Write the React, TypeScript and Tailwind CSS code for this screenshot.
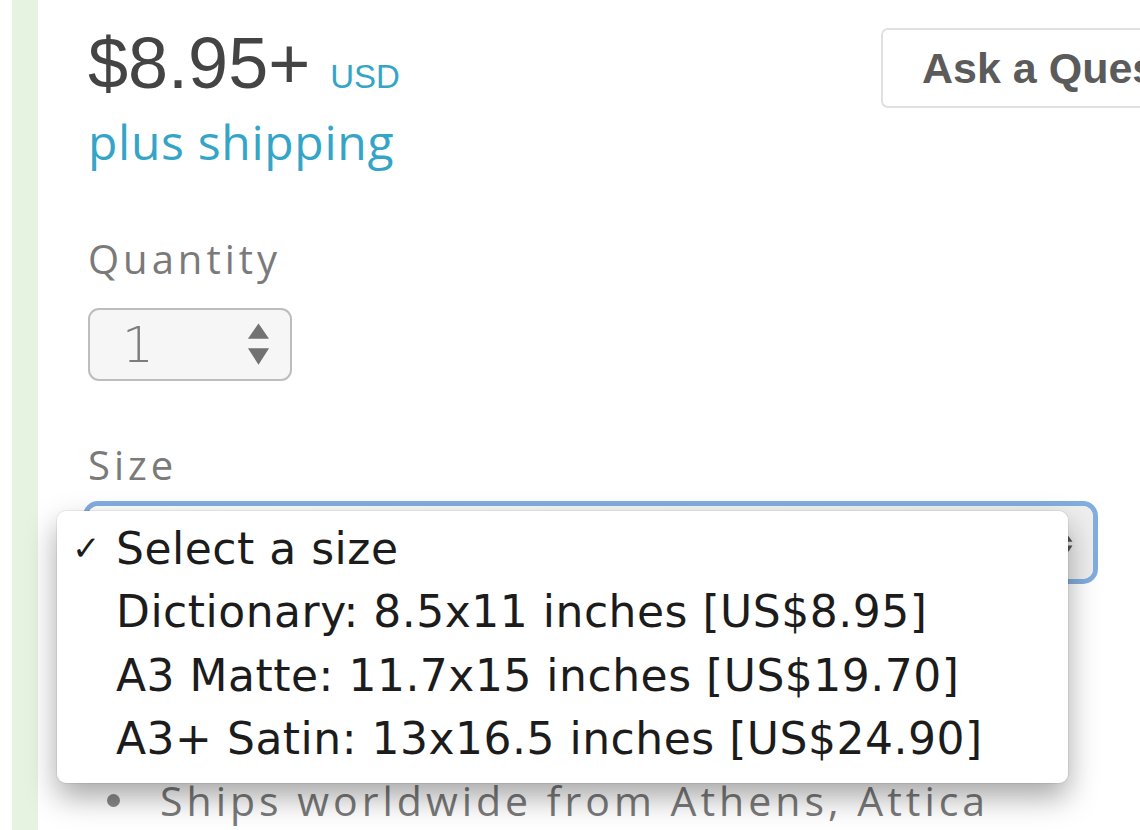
import React from "react";

const sizes = [
  { label: "Select a size", checked: true },
  { label: "Dictionary: 8.5x11 inches [US$8.95]" },
  { label: "A3 Matte: 11.7x15 inches [US$19.70]" },
  { label: "A3+ Satin: 13x16.5 inches [US$24.90]" },
];

const Stepper = ({ className }: { className?: string }) => (
  <svg viewBox="0 0 24 44" className={className} fill="currentColor">
    <path d="M12 0 L23 16 L1 16 Z" />
    <path d="M1 26 L23 26 L12 43 Z" />
  </svg>
);

const App = () => {
  return (
    <div className="flex h-[830px] w-[1140px] overflow-hidden bg-white">
      <div className="w-[12px] shrink-0" />
      <div className="w-[26px] shrink-0 bg-[#e7f3e1]" />

      <main className="min-w-0 flex-1 pl-[50px] font-['Open_Sans',sans-serif]">
        {/* price + ask button */}
        <div className="flex">
          <div className="w-[793px] shrink-0 pt-[27px]">
            <div className="flex items-baseline gap-[20px] leading-[72px]">
              <span className="font-['Liberation_Sans',Arial,sans-serif] text-[72px] text-[#444]">$8.95+</span>
              <span className="font-['Liberation_Sans',Arial,sans-serif] text-[33px] text-[#35a5c7]">USD</span>
            </div>
            <div className="mt-[5px] text-[48px] leading-[48px] tracking-[0.7px] text-[#35a5c7]">plus shipping</div>
          </div>
          <button className="mt-[28px] h-[80px] w-[320px] shrink-0 rounded-[7px] border-2 border-[#e0e0e0] pl-[39px] text-left font-['Liberation_Sans',Arial,sans-serif] text-[43px] font-bold whitespace-nowrap text-[#5b5b5b]">
            Ask a Question
          </button>
        </div>

        {/* quantity */}
        <div className="mt-[73px] text-[40px] leading-[40px] tracking-[4px] text-[#7a7a7a]">Quantity</div>
        <div className="mt-[29px] flex h-[73px] w-[204px] items-center justify-between rounded-[11px] border-2 border-[#bdbdbd] bg-[#f6f6f6] pr-[20px] pl-[32px]">
          <span className="font-['DejaVu_Sans',sans-serif] text-[50px] leading-none font-light text-[#7d7d7d]">1</span>
          <Stepper className="h-[43px] w-[23px] text-[#727272]" />
        </div>

        {/* size */}
        <div className="mt-[64px] text-[40px] leading-[40px] tracking-[4px] text-[#7a7a7a]">Size</div>
        <div className="relative mt-[21px] h-[73px] w-[1005px] rounded-[10px] bg-gradient-to-r from-white to-[#eeeeee] ring-[5px] ring-[#82addf]">
          <Stepper className="absolute top-[30px] right-[20px] h-[16px] w-[9px] text-[#555]" />

          <ul className="absolute top-[5px] left-[-31px] z-10 h-[272px] w-[1011px] rounded-[9px] bg-white pt-[6px] font-['DejaVu_Sans',sans-serif] text-[44px] tracking-[0.5px] text-[#1c1c1c] shadow-[0_14px_30px_rgba(0,0,0,0.35),0_0_0_1px_rgba(0,0,0,0.06)]">
            {sizes.map((s) => (
              <li key={s.label} className="flex h-[63.5px] items-center whitespace-nowrap">
                <span className="w-[59px] shrink-0 pl-[15px] text-[34px]">{s.checked ? "✓" : ""}</span>
                <span>{s.label}</span>
              </li>
            ))}
          </ul>
        </div>

        {/* shipping */}
        <ul className="mt-[199px] text-[41px] leading-[44px] tracking-[4px] text-[#7a7a7a]">
          <li className="flex items-center whitespace-nowrap">
            <span className="mr-[40px] ml-[19px] h-[13px] w-[13px] rounded-full bg-[#8a8a8a]" />
            <span>Ships worldwide from Athens, Attica</span>
          </li>
        </ul>
      </main>
    </div>
  );
};

export default App;
